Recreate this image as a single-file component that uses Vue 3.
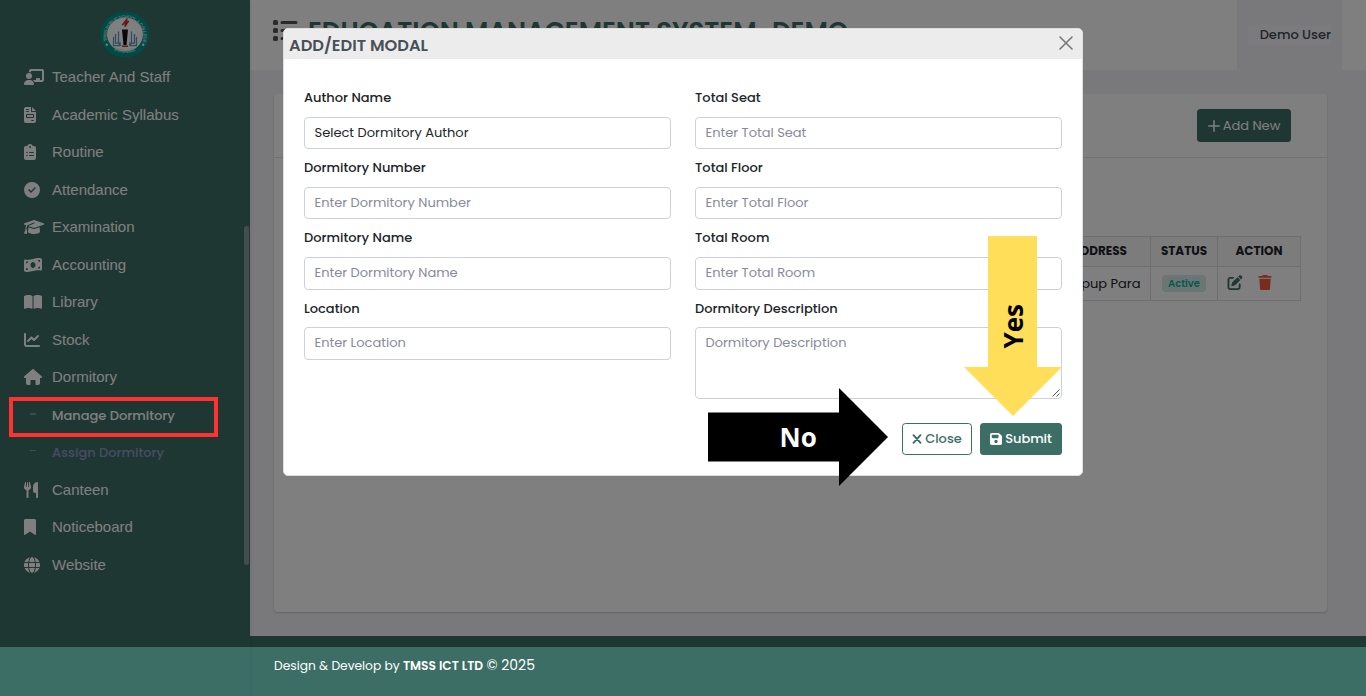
<script setup>
const menu = [
  { label: 'Teacher And Staff', w: 640, d: 'M160 64c0-35.3 28.7-64 64-64H576c35.3 0 64 28.7 64 64V352c0 35.3-28.7 64-64 64H336.8c-11.8-25.5-29.9-47.5-52.4-64H384V320c0-17.7 14.3-32 32-32h64c17.7 0 32 14.3 32 32v32h64V64L224 64v49.1C205.2 102.2 183.3 96 160 96V64zm0 64a96 96 0 1 1 0 192 96 96 0 1 1 0-192zM133.3 352h53.3C260.3 352 320 411.7 320 485.3c0 14.7-11.9 26.7-26.7 26.7H26.7C11.9 512 0 500.1 0 485.3C0 411.7 59.7 352 133.3 352z' },
  { label: 'Academic Syllabus', w: 384, d: 'M64 0C28.7 0 0 28.7 0 64V448c0 35.3 28.7 64 64 64H320c35.3 0 64-28.7 64-64V160H256c-17.7 0-32-14.3-32-32V0H64zM256 0V128H384L256 0zM80 64h64c8.8 0 16 7.2 16 16s-7.2 16-16 16H80c-8.8 0-16-7.2-16-16s7.2-16 16-16zm0 64h64c8.8 0 16 7.2 16 16s-7.2 16-16 16H80c-8.8 0-16-7.2-16-16s7.2-16 16-16zm16 96H288c17.7 0 32 14.3 32 32v64c0 17.7-14.3 32-32 32H96c-17.7 0-32-14.3-32-32V256c0-17.7 14.3-32 32-32zm0 32v64H288V256H96zM240 416h64c8.8 0 16 7.2 16 16s-7.2 16-16 16H240c-8.8 0-16-7.2-16-16s7.2-16 16-16z' },
  { label: 'Routine', w: 384, d: 'M192 0c-41.8 0-77.4 26.7-90.5 64H64C28.7 64 0 92.7 0 128V448c0 35.3 28.7 64 64 64H320c35.3 0 64-28.7 64-64V128c0-35.3-28.7-64-64-64H282.5C269.4 26.7 233.8 0 192 0zm0 64a32 32 0 1 1 0 64 32 32 0 1 1 0-64zM72 272a24 24 0 1 1 48 0 24 24 0 1 1 -48 0zm104-16H304c8.8 0 16 7.2 16 16s-7.2 16-16 16H176c-8.8 0-16-7.2-16-16s7.2-16 16-16zM72 368a24 24 0 1 1 48 0 24 24 0 1 1 -48 0zm88 0c0-8.8 7.2-16 16-16H304c8.8 0 16 7.2 16 16s-7.2 16-16 16H176c-8.8 0-16-7.2-16-16z' },
  { label: 'Attendance', w: 512, d: 'M256 512A256 256 0 1 0 256 0a256 256 0 1 0 0 512zM369 209L241 337c-9.4 9.4-24.6 9.4-33.9 0l-64-64c-9.4-9.4-9.4-24.6 0-33.9s24.6-9.4 33.9 0l47 47L335 175c9.4-9.4 24.6-9.4 33.9 0s9.4 24.6 0 33.9z' },
  { label: 'Examination', w: 640, d: 'M320 32c-8.1 0-16.1 1.4-23.7 4.1L15.8 137.4C6.3 140.9 0 149.9 0 160s6.3 19.1 15.8 22.6l57.9 20.9C57.3 229.3 48 259.8 48 291.9v28.1c0 28.4-10.8 57.7-22.3 80.8c-6.5 13-13.9 25.8-22.5 37.6C0 442.7-.9 448.3 .9 453.4s6 8.9 11.2 10.2l64 16c4.2 1.1 8.7 .3 12.4-2s6.3-6.1 7.1-10.4c8.6-42.8 4.3-81.2-2.1-108.7C90.3 344.3 86 329.8 80 316.5V291.9c0-30.2 10.2-58.7 27.9-81.5c12.9-15.5 29.6-28 49.2-35.7l157-61.7c8.2-3.2 17.5 .8 20.7 9s-.8 17.5-9 20.7l-157 61.7c-12.4 4.9-23.3 12.4-32.2 21.6l159.6 57.6c7.6 2.7 15.6 4.1 23.7 4.1s16.1-1.4 23.7-4.1L624.2 182.6c9.5-3.4 15.8-12.5 15.8-22.6s-6.3-19.1-15.8-22.6L343.7 36.1C336.1 33.4 328.1 32 320 32zM128 408c0 35.3 86 72 192 72s192-36.7 192-72L496.7 262.6 354.5 314c-11.1 4-22.8 6-34.5 6s-23.5-2-34.5-6L143.3 262.6 128 408z' },
  { label: 'Accounting', w: 576, d: 'M0 112.5V422.3c0 18 10.1 35 27 41.3c87 32.5 174 10.3 261-11.9c79.8-20.3 159.6-40.7 239.3-18.9c23 6.3 48.7-9.5 48.7-33.4V89.7c0-18-10.1-35-27-41.3C462 15.9 375 38.1 288 60.3C208.2 80.6 128.4 100.9 48.7 79.1C25.6 72.8 0 88.6 0 112.5zM288 352c-44.2 0-80-43-80-96s35.8-96 80-96s80 43 80 96s-35.8 96-80 96zM64 352c35.3 0 64 28.7 64 64H64V352zm64-208c0 35.3-28.7 64-64 64V144h64zM512 304v64H448c0-35.3 28.7-64 64-64zM448 96h64v64c-35.3 0-64-28.7-64-64z' },
  { label: 'Library', w: 576, d: 'M249.6 471.5c10.8 3.8 22.4-4.1 22.4-15.5V78.6c0-4.2-1.6-8.4-5-11C247.4 52 202.4 32 144 32C93.5 32 46.3 45.3 18.1 56.1C6.8 60.5 0 71.7 0 83.8V454.1c0 11.9 12.8 20.2 24.1 16.5C55.6 460.1 105.5 448 144 448c33.9 0 79 14 105.6 23.5zm76.8 0C353 462 398.1 448 432 448c38.5 0 88.4 12.1 119.9 22.6c11.3 3.8 24.1-4.6 24.1-16.5V83.8c0-12.1-6.8-23.3-18.1-27.6C529.7 45.3 482.5 32 432 32c-58.4 0-103.4 20-123 35.6c-3.3 2.6-5 6.8-5 11V456c0 11.4 11.7 19.3 22.4 15.5z' },
  { label: 'Stock', w: 512, d: 'M64 64c0-17.7-14.3-32-32-32S0 46.3 0 64V400c0 44.2 35.8 80 80 80H480c17.7 0 32-14.3 32-32s-14.3-32-32-32H80c-8.8 0-16-7.2-16-16V64zm406.6 86.6c12.5-12.5 12.5-32.8 0-45.3s-32.8-12.5-45.3 0L320 210.7l-57.4-57.4c-12.5-12.5-32.8-12.5-45.3 0l-112 112c-12.5 12.5-12.5 32.8 0 45.3s32.8 12.5 45.3 0L240 221.3l57.4 57.4c12.5 12.5 32.8 12.5 45.3 0l128-128z' },
  { label: 'Dormitory', w: 576, d: 'M575.8 255.5c0 18-15 32.1-32 32.1h-32l.7 160.2c0 35-29 64.2-64 64.2H400c-17.7 0-32-14.3-32-32V384c0-17.7-14.3-32-32-32H240c-17.7 0-32 14.3-32 32v96c0 17.7-14.3 32-32 32h-48c-35 0-64-29-64-64V287.6H32c-18 0-32-14-32-32.1c0-9 3-17 10-24L266.4 8c7-7 15-8 22-8s15 2 21 7L564.8 231.5c8 7 12 15 11 24z' },
  { label: 'Manage Dormitory', sub: true, active: true },
  { label: 'Assign Dormitory', sub: true },
  { label: 'Canteen', w: 448, d: 'M416 0C400 0 288 32 288 176V288c0 35.3 28.7 64 64 64h32V480c0 17.7 14.3 32 32 32s32-14.3 32-32V352 240 32c0-17.7-14.3-32-32-32zM64 16C64 7.8 57.9 1 49.7 .1S34.2 4.6 32.4 12.5L2.1 148.8C.7 155.1 0 161.5 0 167.9c0 45.9 35.1 83.6 80 87.7V480c0 17.7 14.3 32 32 32s32-14.3 32-32V255.6c44.9-4.1 80-41.8 80-87.7c0-6.4-.7-12.8-2.1-19.1L191.6 12.5c-1.8-8-9.3-13.3-17.4-12.4S160 7.8 160 16V150.2c0 5.4-4.4 9.8-9.8 9.8c-5.1 0-9.3-3.9-9.8-9L127.9 14.6C127.2 6.3 120.3 0 112 0s-15.2 6.3-15.9 14.6L83.7 151c-.5 5.1-4.7 9-9.8 9c-5.4 0-9.8-4.4-9.8-9.8V16z' },
  { label: 'Noticeboard', w: 384, d: 'M0 48V487.7C0 501.1 10.9 512 24.3 512c5 0 9.9-1.5 14-4.4L192 400 345.7 507.6c4.1 2.9 9 4.4 14 4.4c13.4 0 24.3-10.9 24.3-24.3V48c0-26.5-21.5-48-48-48H48C21.5 0 0 21.5 0 48z' },
  { label: 'Website', w: 512, d: 'M352 256c0 22.2-1.2 43.6-3.3 64H163.3c-2.2-20.4-3.3-41.8-3.3-64s1.2-43.6 3.3-64H348.7c2.2 20.4 3.3 41.8 3.3 64zm28.8-64H503.9c5.3 20.5 8.1 41.9 8.1 64s-2.8 43.5-8.1 64H380.8c2.1-20.6 3.2-42 3.2-64s-1.1-43.4-3.2-64zm112.6-32H376.7c-10-63.9-29.8-117.4-55.3-151.6c78.3 20.7 142 77.5 171.9 151.6zm-149.1 0H167.7c6.1-36.4 15.5-68.6 27-94.7c10.5-23.6 22.2-40.7 33.5-51.5C239.4 3.2 248.7 0 256 0s16.6 3.2 27.8 13.8c11.3 10.8 23 27.9 33.5 51.5c11.6 26 20.9 58.2 27 94.7zm-209 0H18.6C48.6 85.9 112.2 29.1 190.6 8.4C165.1 42.6 145.3 96.1 135.3 160zM8.1 192H131.2c-2.1 20.6-3.2 42-3.2 64s1.1 43.4 3.2 64H8.1C2.8 299.5 0 278.1 0 256s2.8-43.5 8.1-64zM194.7 446.6c-11.6-26-20.9-58.2-27-94.6H344.3c-6.1 36.4-15.5 68.6-27 94.6c-10.5 23.6-22.2 40.7-33.5 51.5C272.6 508.8 263.3 512 256 512s-16.6-3.2-27.8-13.8c-11.3-10.8-23-27.9-33.5-51.5zM135.3 352c10 63.9 29.8 117.4 55.3 151.6C112.2 482.9 48.6 426.1 18.6 352H135.3zm358.1 0c-30 74.1-93.6 130.9-171.9 151.6c25.5-34.2 45.2-87.7 55.3-151.6H493.4z' },
]

const columns = [
  [
    { label: 'Author Name', text: 'Select Dormitory Author', filled: true },
    { label: 'Dormitory Number', text: 'Enter Dormitory Number' },
    { label: 'Dormitory Name', text: 'Enter Dormitory Name' },
    { label: 'Location', text: 'Enter Location' },
  ],
  [
    { label: 'Total Seat', text: 'Enter Total Seat' },
    { label: 'Total Floor', text: 'Enter Total Floor' },
    { label: 'Total Room', text: 'Enter Total Room' },
    { label: 'Dormitory Description', text: 'Dormitory Description', area: true },
  ],
]
</script>

<template>
  <div class="page">
    <aside class="sidebar">
      <div class="brand">
        <svg width="50" height="47" viewBox="0 0 100 94" preserveAspectRatio="none">
          <defs>
            <path id="ringTop" d="M14 60A37 37 0 1 1 86 60" />
            <path id="ringBottom" d="M22 73A41 41 0 0 0 78 73" />
          </defs>
          <ellipse cx="50" cy="47" rx="49" ry="46" fill="#00968a" />
          <ellipse cx="50" cy="47" rx="36" ry="34" fill="#fff" />
          <text class="ring" fill="#c5e2df"><textPath href="#ringTop" textLength="136">TMSS PUBLIC SCHOOL &amp; COLLEGE</textPath></text>
          <text class="ring" fill="#c5e2df"><textPath href="#ringBottom" startOffset="8" textLength="44">ESTD-2011</textPath></text>
          <path d="M12 66l3 3M88 66l-3 3" stroke="#fff" stroke-width="4" />
          <path d="M44 28l10-13v7l4-2-8 12v-7z" fill="#d32f2f" stroke="#d32f2f" stroke-width="2" />
          <path d="M44 37h12l-3 31h-6z" fill="#111" />
          <path d="M44 69h12v3H44z" fill="#d32f2f" />
          <path d="M27 52v17h14M31 46v18h11M37 41v24l5 4M73 52v17H59M69 46v18H58M63 41v24l-5 4" fill="none" stroke="#5a9cc4" stroke-width="2.500" />
        </svg>
      </div>
      <nav>
        <div v-for="m in menu" :key="m.label" class="item" :class="{ sub: m.sub, active: m.active }">
          <span class="ico">
            <i v-if="m.sub" class="dash"></i>
            <svg v-else height="16" :width="m.w / 32" :viewBox="`0 0 ${m.w} 512`"><path :d="m.d" /></svg>
          </span>
          <span class="text">{{ m.label }}</span>
        </div>
      </nav>
      <div class="thumb"></div>
    </aside>

    <div class="main">
      <header class="topbar">
        <svg class="burger" width="25" height="22" viewBox="0 0 25 22">
          <path d="M0 1.500a1.500 1.500 0 0 1 1.500-1.500h2a1.500 1.500 0 0 1 1.500 1.500v2a1.500 1.500 0 0 1-1.500 1.500h-2a1.500 1.500 0 0 1-1.500-1.500zM0 9.500A1.500 1.500 0 0 1 1.500 8h2A1.500 1.500 0 0 1 5 9.500v2A1.500 1.500 0 0 1 3.500 13h-2A1.500 1.500 0 0 1 0 11.500zM0 17.500A1.500 1.500 0 0 1 1.500 16h2A1.500 1.500 0 0 1 5 17.500v2A1.500 1.500 0 0 1 3.500 21h-2A1.500 1.500 0 0 1 0 19.500z" />
          <path d="M9 2.500h14M9 10.500h14M9 18.500h14" stroke="#555" stroke-width="3" stroke-linecap="round" />
        </svg>
        <h1>EDUCATION MANAGEMENT SYSTEM<span class="hyphen">-</span> DEMO</h1>
        <div class="user"><span>Demo User</span></div>
      </header>

      <section class="card">
        <div class="card-head">
          <button class="btn add">
            <svg width="12" height="12" viewBox="0 0 12 12"><path d="M6 .8v10.400M.8 6h10.400" stroke="#fff" stroke-width="1.500" stroke-linecap="round" /></svg>
            <span>Add New</span>
          </button>
        </div>
        <div class="table">
          <div class="th"></div>
          <div class="th addr">ADDRESS</div>
          <div class="th">STATUS</div>
          <div class="th">ACTION</div>
          <div class="td"></div>
          <div class="td para">pup Para</div>
          <div class="td"><span class="badge">Active</span></div>
          <div class="td actions">
            <svg width="16" height="15" viewBox="0 0 512 512" fill="#3d7068"><path d="M471.600 21.700c-21.900-21.900-57.300-21.900-79.200 0L362.300 51.700l97.900 97.900 30.100-30.100c21.900-21.900 21.900-57.300 0-79.200L471.600 21.700zm-299.200 220c-6.100 6.100-10.800 13.600-13.500 21.900l-29.600 88.800c-2.900 8.600-.6 18.100 5.800 24.600s15.900 8.700 24.600 5.800l88.800-29.600c8.200-2.700 15.700-7.400 21.900-13.500L437.700 172.300 339.700 74.300 172.400 241.700zM96 64C43 64 0 107 0 160V416c0 53 43 96 96 96H352c53 0 96-43 96-96V320c0-17.700-14.300-32-32-32s-32 14.300-32 32v96c0 17.700-14.300 32-32 32H96c-17.700 0-32-14.300-32-32V160c0-17.700 14.300-32 32-32h96c17.700 0 32-14.300 32-32s-14.300-32-32-32H96z" /></svg>
            <svg width="14" height="15" viewBox="0 0 448 512" fill="#f1593a"><path d="M135.200 17.700L128 32H32C14.300 32 0 46.300 0 64S14.300 96 32 96H416c17.700 0 32-14.300 32-32s-14.300-32-32-32H320l-7.200-14.300C307.400 6.800 296.300 0 284.200 0H163.800c-12.100 0-23.200 6.800-28.600 17.700zM416 128H32L53.200 467c1.600 25.300 22.600 45 47.900 45H346.900c25.300 0 46.300-19.700 47.900-45L416 128z" /></svg>
          </div>
        </div>
      </section>

      <footer class="footer">Design &amp; Develop by <b>TMSS ICT LTD</b> <span class="copy">© 2025</span></footer>
    </div>

    <div class="backdrop"></div>

    <div class="highlight"></div>

    <div class="modal">
      <div class="modal-head">
        <h2>ADD/EDIT MODAL</h2>
        <svg width="14" height="14" viewBox="0 0 14 14"><path d="M1 1l12 12M13 1L1 13" stroke="#777" stroke-width="1.600" stroke-linecap="round" /></svg>
      </div>
      <div class="modal-body">
        <div v-for="(col, i) in columns" :key="i" class="col">
          <div v-for="f in col" :key="f.label" class="field">
            <label>{{ f.label }}</label>
            <div class="control" :class="{ filled: f.filled, area: f.area }">
              <span>{{ f.text }}</span>
              <svg v-if="f.area" class="grip" width="8" height="8" viewBox="0 0 8 8"><path d="M.5 7.500l7-7M4.500 7.500l3-3" stroke="#555" stroke-width="1" /></svg>
            </div>
          </div>
        </div>
      </div>
      <div class="modal-foot">
        <button class="btn close">
          <svg width="10" height="10" viewBox="0 0 10 10"><path d="M1.500 1.200l7 7.600M8.500 1.200L1.500 8.800" stroke="#3c6e66" stroke-width="1.900" stroke-linecap="round" /></svg>
          <span>Close</span>
        </button>
        <button class="btn submit">
          <svg width="12" height="14" viewBox="0 0 448 512" fill="#fff"><path d="M64 32C28.700 32 0 60.700 0 96V416c0 35.300 28.700 64 64 64H384c35.300 0 64-28.700 64-64V173.300c0-17-6.700-33.300-18.700-45.300L352 50.700C340 38.700 323.700 32 306.700 32H64zm0 96c0-17.700 14.300-32 32-32H288c17.700 0 32 14.300 32 32v64c0 17.700-14.300 32-32 32H96c-17.700 0-32-14.300-32-32V128zM224 288a64 64 0 1 1 0 128 64 64 0 1 1 0-128z" /></svg>
          <span>Submit</span>
        </button>
      </div>
    </div>

    <div class="arrow no">
      <svg width="180" height="98" viewBox="0 0 180 98"><path d="M0 24.500h131V0l49 49-49 49V73.500H0z" fill="#000" /></svg>
      <span>No</span>
    </div>
    <div class="arrow yes">
      <svg width="98" height="180" viewBox="0 0 98 180"><path d="M24 0h49v131h25l-49 49L0 131h24z" fill="#ffde59" /></svg>
      <span>Yes</span>
    </div>
  </div>
</template>

<style>
html, body { margin: 0; overflow: hidden; }
</style>

<style scoped>
* { box-sizing: border-box; }
.page { position: relative; display: flex; width: 1366px; height: 696px; overflow: hidden; background: #f3f3f9; font-family: Poppins, Inter, "Noto Sans", sans-serif; font-size: 13px; color: #212529; }
.sidebar { position: relative; width: 250px; height: 696px; background: #3c6e66; flex: none; box-shadow: 0 2px 4px rgba(15, 34, 58, .12); }
.brand { height: 58.500px; padding: 11px 0 0 99.500px; }
.brand svg { display: block; }
.ring { font: bold 9px "Liberation Sans", sans-serif; }
.item { display: flex; align-items: center; height: 37.530px; font-family: "Liberation Sans", Arial, sans-serif; font-size: 15px; color: #fff; white-space: nowrap; }
.text { margin-top: -1px; }
.ico { display: flex; width: 28px; margin-left: 24px; fill: #fff; }
.sub { font-family: Poppins, Inter, sans-serif; font-size: 13px; font-weight: 500; color: #9099ca; }
.sub .text { margin-top: 1.600px; }
.active { color: #fff; }
.dash { width: 6px; height: 1px; margin: -2px 0 0 6px; background: #7f96a0; }
.active .dash { height: 2px; }
.thumb { position: absolute; left: 244px; top: 226px; width: 5px; height: 339px; border-radius: 3px; background: #899c99; }
.main { flex: 1; display: flex; flex-direction: column; }
.topbar { display: flex; height: 70px; background: #fff; padding: 0 24px 0 23px; }
.burger { margin-top: 20px; flex: none; fill: #555; }
h1 { margin: 15px 0 0 10px; width: 580px; flex: none; font-size: 26px; line-height: 35px; font-weight: 600; color: #3c6e66; white-space: nowrap; }
.hyphen { letter-spacing: -6px; }
.user { margin-left: auto; width: 105px; height: 70px; background: #f3f3f9; padding: 25px 11px 0; font-weight: 500; color: #444b55; }
.user span { display: block; height: 20px; line-height: 20px; background: #f7f7fa; text-align: right; white-space: nowrap; }
.card { width: 1053px; height: 518px; margin: 24px 0 0 24px; border-radius: 4px; background: #fff; box-shadow: 0 1px 2px rgba(56, 65, 74, .25); }
.card-head { display: flex; justify-content: flex-end; height: 64px; border-bottom: 1px solid #e4e5e8; padding: 15px 36px 0 0; }
.btn { display: flex; align-items: center; justify-content: center; border: 0; border-radius: 3.500px; padding: 0; background: #3c6e66; color: #fff; font-family: inherit; font-size: 13px; font-weight: 500; white-space: nowrap; }
.add { width: 94px; height: 33px; gap: 3px; font-weight: 400; font-size: 13px; }
.table { display: grid; grid-template-columns: 750px 101px 67px 83px; grid-template-rows: 30px 34px; width: 1001px; margin: 78px 0 0 26px; border-top: 1px solid #dadce0; }
.th, .td { display: flex; align-items: center; justify-content: center; border-right: 1px solid #dadce0; border-bottom: 1px solid #dadce0; white-space: nowrap; }
.th { background: #f9f9fa; font-size: 12px; font-weight: 700; color: #212529; padding-bottom: 2px; }
.addr { justify-content: flex-end; padding-right: 23px; }
.para { justify-content: flex-end; padding-right: 9.500px; font-size: 13px; }
.badge { width: 44px; height: 17px; border-radius: 4px; background: #d6ebe7; color: #0ab39c; font-size: 10px; font-weight: 600; line-height: 17px; text-align: center; }
.actions { justify-content: flex-start; padding: 0 0 2px 9px; gap: 15px; }
.footer { height: 60px; margin-top: 24px; background: #3c6e66; color: #fff; padding: 18px 24px 0; line-height: 22px; white-space: nowrap; font-size: 12.250px; }
.footer b { font-weight: 600; font-size: 12.250px; }
.copy { font-size: 14px; }
.backdrop { position: absolute; left: 0; top: 0; width: 1366px; height: 647px; background: rgba(0, 0, 0, .5); }
.highlight { position: absolute; left: 9px; top: 397px; width: 208.500px; height: 40px; border: 4px solid #ff3131; }
.modal { position: absolute; left: 283px; top: 28px; width: 800px; height: 448px; border: 1px solid #dedede; border-radius: 5px; background: #fff; overflow: hidden; }
.modal-head { display: flex; justify-content: space-between; height: 30px; background: #ececec; padding: 0 9.500px 0 5px; }
.modal-head svg { margin-top: 6.500px; }
h2 { margin: 0; font-size: 16.250px; font-weight: 600; line-height: 33px; color: #495057; }
.modal-body { display: flex; gap: 24px; padding: 29.100px 20px 0; height: 364px; }
.col { width: 367px; }
.field { height: 70.150px; }
label { display: block; height: 28.900px; line-height: 20px; font-weight: 500; }
.control { position: relative; height: 32.300px; border: 1px solid #ced4da; border-color: #cdd1db; border-radius: 4px; padding: 0 9.500px; line-height: 30.200px; color: #878a99; }
.filled { color: #212529; }
.area { height: 72px; }
.grip { position: absolute; right: 1px; bottom: 1px; }
.modal-foot { display: flex; justify-content: flex-end; gap: 8px; padding-right: 20px; }
.close { width: 70px; height: 32px; gap: 3px; border: 1px solid #3c6e66; background: #fff; color: #3c6e66; }
.submit { width: 82px; height: 32px; gap: 3px; }
.submit span { letter-spacing: -.1px; }
.arrow { position: absolute; font: 700 26px "Open Sans", "Noto Sans", sans-serif; }
.arrow svg { display: block; }
.arrow span { position: absolute; line-height: 30px; }
.no { left: 708px; top: 387.500px; }
.no span { left: 71.500px; top: 34px; color: #fff; }
.yes { left: 964px; top: 235.500px; }
.yes span { left: 34px; top: 68px; writing-mode: vertical-rl; transform: rotate(180deg); color: #000; }
</style>
